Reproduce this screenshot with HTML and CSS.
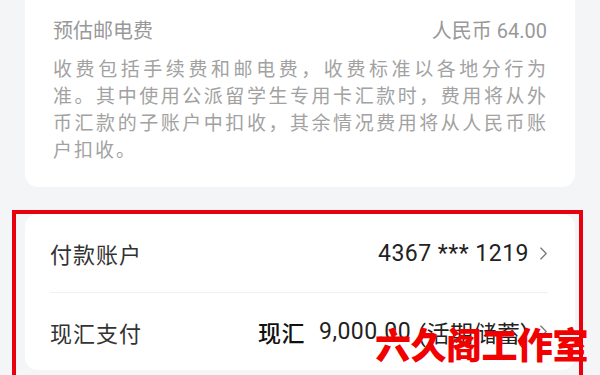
FILE: index.html
```html
<!DOCTYPE html>
<html lang="zh-CN">
<head>
<meta charset="utf-8">
<title>汇款费用</title>
<link rel="stylesheet" href="styles.css">
</head>
<body>
<div class="page">
  <section class="card fee">
    <div class="fee-head">
      <span class="fee-title">预估邮电费</span>
      <span class="fee-amount">人民币 64.00</span>
    </div>
    <p class="fee-note">
      <span class="line">收费包括手续费和邮电费，收费标准以各地分行为</span>
      <span class="line">准。其中使用公派留学生专用卡汇款时，费用将从外</span>
      <span class="line">币汇款的子账户中扣收，其余情况费用将从人民币账</span>
      <span class="line last">户扣收。</span>
    </p>
  </section>

  <section class="card pay">
    <div class="row">
      <span class="label">付款账户</span>
      <span class="value">4367 *** 1219<svg class="chev" viewBox="0 0 10 16" width="9" height="15"><polyline points="2,2 8,8 2,14" fill="none" stroke="#7a7a7a" stroke-width="1.5" stroke-linecap="round" stroke-linejoin="round"/></svg></span>
    </div>
    <div class="row">
      <span class="label">现汇支付</span>
      <span class="value"><b class="cash">现汇</b><span class="num">9,000.00</span>(活期储蓄)<svg class="chev" viewBox="0 0 10 16" width="9" height="15"><polyline points="2,2 8,8 2,14" fill="none" stroke="#7a7a7a" stroke-width="1.5" stroke-linecap="round" stroke-linejoin="round"/></svg></span>
    </div>
  </section>

  <div class="mark-box"></div>
  <div class="watermark">六久阁工作室</div>
</div>
</body>
</html>
```

FILE: styles.css
```css
html, body {
  margin: 0;
  padding: 0;
}

body {
  background: #f4f5f7;
  font-family: Roboto, "Noto Sans CJK SC", "Noto Sans", sans-serif;
}

.page {
  position: relative;
  width: 600px;
  height: 375px;
  overflow: hidden;
  padding: 0 25px;
  box-sizing: border-box;
}

.card {
  background: #ffffff;
}

.fee {
  border-radius: 0 0 13px 13px;
  padding: 15px 28px 23px 28px;
}

.fee-head {
  display: flex;
  justify-content: space-between;
  align-items: center;
  height: 28px;
  font-size: 20px;
  color: #999999;
}

.fee-note {
  margin: 13px 0 0 0;
  font-size: 19px;
  line-height: 27px;
  color: #a2a2a2;
}

.fee-note .line {
  display: block;
  text-align: justify;
  text-align-last: justify;
  text-justify: inter-character;
  letter-spacing: 1px;
}

.fee-note .line.last {
  text-align: left;
  text-align-last: left;
  letter-spacing: 2px;
}

.pay {
  margin-top: 27px;
  border-radius: 13px;
  padding: 0 27px 0 25px;
}

.row {
  display: flex;
  justify-content: space-between;
  align-items: center;
  height: 78px;
}

.row + .row {
  border-top: 1px solid #f1f1f1;
  height: 77px;
}

.label {
  font-size: 22px;
  letter-spacing: 1px;
  color: #333333;
}

.value {
  display: flex;
  align-items: center;
  font-size: 23px;
  color: #222222;
  letter-spacing: 0.5px;
}

.cash {
  font-weight: 500;
  margin-right: 14px;
  color: #111111;
}

.num {
  margin-right: 7px;
}

.chev {
  margin-left: 10px;
}

.mark-box {
  position: absolute;
  left: 12px;
  top: 210px;
  width: 571px;
  height: 220px;
  box-sizing: border-box;
  border: 4px solid #e8000f;
}

.watermark {
  position: absolute;
  left: 375px;
  top: 326px;
  font-size: 36px;
  font-weight: 900;
  line-height: 42px;
  color: #f20000;
  letter-spacing: -0.5px;
  white-space: nowrap;
}
```
